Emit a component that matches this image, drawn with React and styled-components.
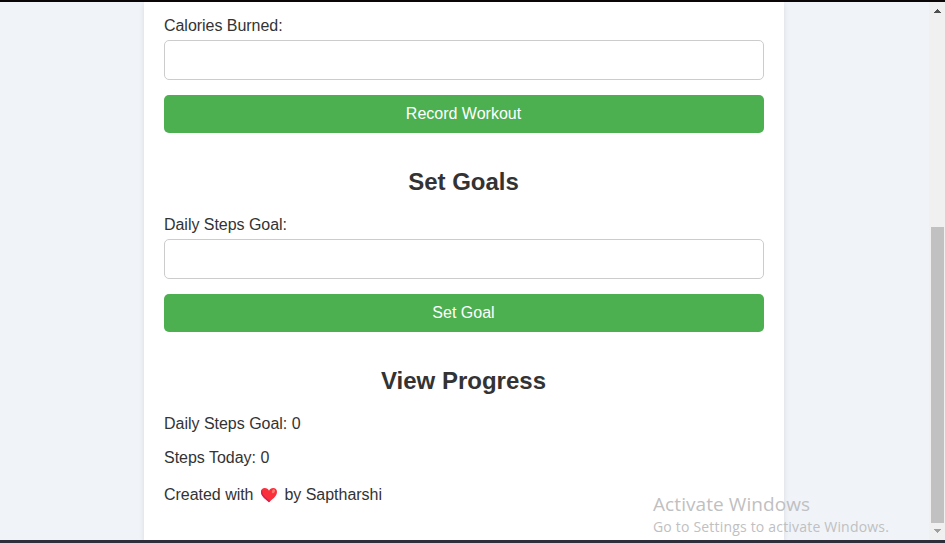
import React from 'react';
import styled, { createGlobalStyle } from 'styled-components';

const GlobalStyle = createGlobalStyle`
  * { box-sizing: border-box; }
  body { margin: 0; overflow: hidden; background: #f0f4f8; }
`;

const Screen = styled.div`
  position: relative;
  display: flex;
  flex-direction: column;
  width: 945px;
  height: 543px;
  overflow: hidden;
  border-top: 2px solid #0a0506;
  border-bottom: 3px solid #2d2e3a;
  background: #f0f4f8;
  color: #333;
  font: 16px/18px 'Liberation Sans', Arial, sans-serif;
`;

const Viewport = styled.div`
  display: flex;
  flex: 1;
  min-height: 0;
`;

const Page = styled.main`
  display: flex;
  flex: 1;
  justify-content: center;
  padding-right: 1px;
`;

const Card = styled.div`
  width: 640px;
  padding: 15px 20px 0;
  background: #fff;
  box-shadow: 0 2px 5px rgba(0, 0, 0, 0.1);
`;

const Form = styled.form`
  display: flex;
  flex-direction: column;
`;

const Label = styled.label`
  margin-bottom: 5px;
  letter-spacing: -0.04px;
`;

const Input = styled.input`
  width: 100%;
  height: 40px;
  margin: 0 0 15px;
  padding: 10px;
  border: 1px solid #ccc;
  border-radius: 5px;
  background: #fff;
  font: inherit;
`;

const Button = styled.button`
  height: 38px;
  padding: 0 1px 0 0;
  border: 0;
  border-radius: 5px;
  background: #4caf50;
  color: #fff;
  font: inherit;
`;

const Heading = styled.h2`
  margin: 35px 0 21px;
  padding-right: 1px;
  font-size: 24px;
  line-height: 27px;
  text-align: center;
`;

const Stat = styled.p`
  margin: 0 0 16px;
  letter-spacing: -0.02px;
`;

const Credit = styled.p`
  display: flex;
  align-items: center;
  margin: 19px 0 0;
  letter-spacing: -0.03px;
`;

const Heart = styled.svg`
  width: 18px;
  height: 16px;
  margin: 0 6px 0 7px;
`;

const ScrollTrack = styled.div`
  display: flex;
  flex-direction: column;
  align-items: center;
  width: 16px;
  padding-left: 1px;
  background: #f0f0f0;
`;

const Arrow = styled.svg`
  width: 7px;
  height: 4px;
  margin: ${({ $down }) => ($down ? '6px 0 0' : '7px 0 214px')};
  flex: none;
  fill: ${({ $down }) => ($down ? '#a0a0a0' : '#505050')};
`;

const Thumb = styled.div`
  width: 13px;
  height: 296px;
  flex: none;
  background: #c1c1c1;
`;

const Watermark = styled.div`
  position: absolute;
  left: 653px;
  top: 489px;
  color: #bfc0c2;
  font-family: 'Open Sans', 'Noto Sans', sans-serif;
  white-space: nowrap;
`;

const WatermarkTitle = styled.div`
  font-size: 19px;
  line-height: 26px;
  letter-spacing: 0.08px;
`;

const WatermarkNote = styled.div`
  font-size: 14px;
  line-height: 20px;
  letter-spacing: 0.19px;
`;

function Field({ id, label, action }) {
  return (
    <Form onSubmit={(event) => event.preventDefault()}>
      <Label htmlFor={id}>{label}</Label>
      <Input id={id} />
      <Button type="submit">{action}</Button>
    </Form>
  );
}

export default function App() {
  return (
    <>
      <GlobalStyle />
      <Screen>
        <Viewport>
          <Page>
            <Card>
              <Field id="calories" label="Calories Burned:" action="Record Workout" />
              <Heading>Set Goals</Heading>
              <Field id="steps-goal" label="Daily Steps Goal:" action="Set Goal" />
              <Heading>View Progress</Heading>
              <Stat>Daily Steps Goal: 0</Stat>
              <Stat>Steps Today: 0</Stat>
              <Credit>
                Created with
                <Heart viewBox="0 0 18 16" aria-label="love">
                  <path d="M9 15.2C6.5 13 1 9.5 1 5.1 1 2.5 2.7 1 4.8 1 6.7 1 8.2 2 9 3.7 9.8 2 11.3 1 13.2 1 15.3 1 17 2.5 17 5.1 17 9.5 11.5 13 9 15.2Z" fill="#f92f3c" />
                  <path d="M1 5.1C1 9.5 6.5 13 9 15.2l1.6-1.4C6.5 11.6 2 8.5 2 2.5 1.4 3.2 1 4 1 5.1Z" fill="#d8204a" />
                  <ellipse cx="13.4" cy="4.3" rx="1.4" ry="2.1" transform="rotate(28 13.4 4.3)" fill="#ff7a70" />
                </Heart>
                by Saptharshi
              </Credit>
            </Card>
          </Page>
          <ScrollTrack>
            <Arrow viewBox="0 0 7 4" shapeRendering="crispEdges"><path d="M3 0h1v1h1v1h1v1h1v1H0V3h1V2h1V1h1z" /></Arrow>
            <Thumb />
            <Arrow $down viewBox="0 0 7 4" shapeRendering="crispEdges"><path d="M0 0h7v1H6v1H5v1H4v1H3V3H2V2H1V1H0z" /></Arrow>
          </ScrollTrack>
        </Viewport>
        <Watermark>
          <WatermarkTitle>Activate Windows</WatermarkTitle>
          <WatermarkNote>Go to Settings to activate Windows.</WatermarkNote>
        </Watermark>
      </Screen>
    </>
  );
}
